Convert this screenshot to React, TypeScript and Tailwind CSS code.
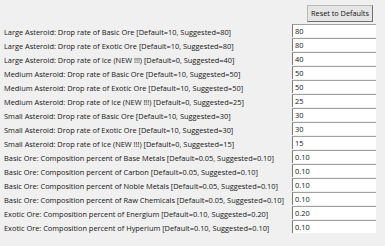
const settings: { label: string; value: string }[] = [
  { label: "Large Asteroid: Drop rate of Basic Ore [Default=10, Suggested=80]", value: "80" },
  { label: "Large Asteroid: Drop rate of Exotic Ore [Default=10, Suggested=80]", value: "80" },
  { label: "Large Asteroid: Drop rate of Ice (NEW !!!) [Default=0, Suggested=40]", value: "40" },
  { label: "Medium Asteroid: Drop rate of Basic Ore [Default=10, Suggested=50]", value: "50" },
  { label: "Medium Asteroid: Drop rate of Exotic Ore [Default=10, Suggested=50]", value: "50" },
  { label: "Medium Asteroid: Drop rate of Ice (NEW !!!) [Default=0, Suggested=25]", value: "25" },
  { label: "Small Asteroid: Drop rate of Basic Ore [Default=10, Suggested=30]", value: "30" },
  { label: "Small Asteroid: Drop rate of Exotic Ore [Default=10, Suggested=30]", value: "30" },
  { label: "Small Asteroid: Drop rate of Ice (NEW !!!) [Default=0, Suggested=15]", value: "15" },
  { label: "Basic Ore: Composition percent of Base Metals [Default=0.05, Suggested=0.10]", value: "0.10" },
  { label: "Basic Ore: Composition percent of Carbon [Default=0.05, Suggested=0.10]", value: "0.10" },
  { label: "Basic Ore: Composition percent of Noble Metals [Default=0.05, Suggested=0.10]", value: "0.10" },
  { label: "Basic Ore: Composition percent of Raw Chemicals [Default=0.05, Suggested=0.10]", value: "0.10" },
  { label: "Exotic Ore: Composition percent of Energium [Default=0.10, Suggested=0.20]", value: "0.20" },
  { label: "Exotic Ore: Composition percent of Hyperium [Default=0.10, Suggested=0.10]", value: "0.10" },
];

export default function App() {
  return (
    <div
      className="w-[385px] h-[246px] bg-[#f0f0f0] text-[#141414] overflow-hidden"
      style={{ fontFamily: '"Open Sans", "Noto Sans", sans-serif' }}
    >
      {/* toolbar */}
      <div className="flex justify-end pt-[5px] pr-[12px]">
        <button className="h-[17px] w-[66px] bg-[#e5e5e5] border border-[#b8b8b8] border-r-[#707070] border-b-[#707070] text-[7.3px] leading-none text-[#111] whitespace-nowrap">
          Reset to Defaults
        </button>
      </div>

      {/* setting rows */}
      <div className="mt-[2px] pl-[4px] grid grid-cols-[288px_84px]">
        {settings.map((s, i) => (
          <div key={i} className="contents">
            <div className="h-[14px] pt-[2px] text-[7.4px] leading-[12px] whitespace-nowrap">
              {s.label}
            </div>
            <div className="h-[14px] pb-[1px]">
              <div className="h-[13px] bg-white border-t border-l border-[#a0a0a0] border-l-[#7a7a7a] pl-[2px] text-[7.4px] leading-[12px]">
                {s.value}
              </div>
            </div>
          </div>
        ))}
      </div>
    </div>
  );
}
